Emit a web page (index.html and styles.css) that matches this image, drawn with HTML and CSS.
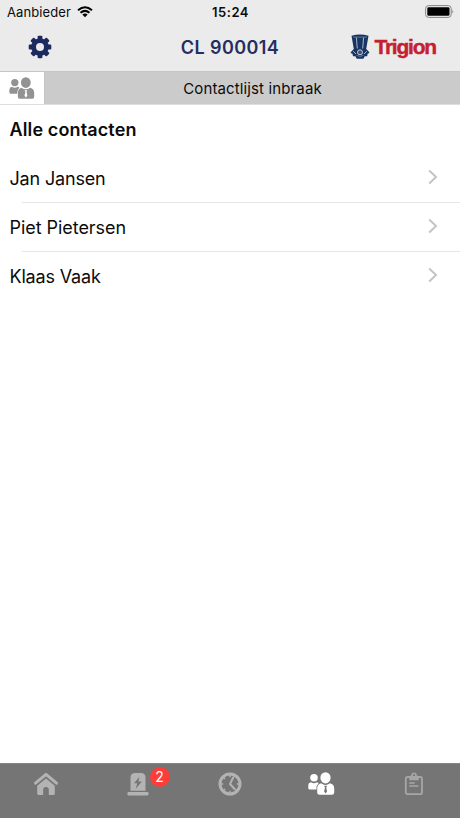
FILE: index.html
```html
<!DOCTYPE html>
<html lang="nl">
<head>
<meta charset="utf-8">
<title>Contactlijst inbraak</title>
<link rel="stylesheet" href="styles.css">
</head>
<body>
<svg class="defs" width="0" height="0">
  <symbol id="people" viewBox="0 0 27 24">
    <circle cx="6" cy="5.8" r="3.8"/>
    <path d="M3 10.2Q6 12.3 9 10.2Q10.2 10.5 10.7 11.1Q8.4 13 8.4 17.4H1.4Q.3 17.4.3 16V13.5Q.3 10.8 3 10.2Z"/>
    <ellipse cx="17.5" cy="5.8" rx="5.1" ry="5.6"/>
    <path fill-rule="evenodd" d="M13 11.3Q17.5 14.5 22 11.3Q26.2 12.3 26.2 16.5V20.5Q26.2 22.8 23.8 22.8H11.5Q9.2 22.8 9.2 20.5V16.5Q9.2 12.3 13 11.3ZM16.1 13.7L17 15.4L16.1 19.5L17.6 21.5L19.1 19.5L18.2 15.4L19.1 13.7Z"/>
  </symbol>
</svg>
<div class="app">
  <header class="top">
    <div class="status">
      <div class="carrier"><span>Aanbieder</span>
        <svg width="16" height="12" viewBox="0 0 16 12" fill="none" stroke="#000" stroke-width="2"><path d="M1 4.2Q8-1.8 15 4.2M3.5 6.8Q8 3 12.5 6.8"/><path d="M5.3 8.6Q8 6.6 10.7 8.6L8 11.3Z" fill="#000" stroke="none"/></svg>
      </div>
      <time>15:24</time>
      <svg class="battery" width="29" height="13" viewBox="0 0 29 13"><rect x=".6" y=".6" width="25.6" height="11.8" rx="3" fill="none" stroke="#858585"/><rect x="2.3" y="2.2" width="22.2" height="8.6" rx="1.4"/><path d="M27.3 4.5Q29 6.5 27.3 8.5Z" fill="#858585"/></svg>
    </div>
    <div class="nav">
      <svg class="gear" width="24" height="24" viewBox="-12 -12 24 24" fill="#1c2a5d">
        <g id="teeth"><rect x="-2.4" y="-11.3" width="4.8" height="22.6" rx="1"/><rect x="-11.3" y="-2.4" width="22.6" height="4.8" rx="1"/></g>
        <use href="#teeth" transform="rotate(45)"/>
        <circle r="8.8"/><circle r="4" fill="#ebebeb"/>
      </svg>
      <h1>CL 900014</h1>
      <div class="brand">
        <svg width="20" height="26" viewBox="0 0 20 26">
          <path fill="#173463" d="M1.5 1.7Q10-.5 18.5 1.7L16.2 15L18.7 17.4L19.5 19L17.6 19.8L17.2 22.2L14.8 22.3L13.4 24.8H6.8L5.4 22.3L3 22.2L2.5 19.8L.5 19L1.4 17.4L3.8 15Z"/>
          <path fill="none" stroke="#a9b6c7" stroke-width="1" d="M6.4 3.4L7.3 14.5M13.6 3.4L12.7 14.5M3.2 17.2L6 20M16.8 17.2L14 20"/>
          <path fill="none" stroke="#8293ac" stroke-width=".7" d="M3 3.1H17"/>
          <circle cx="10" cy="18.3" r="2.5" fill="#385277" stroke="#c4ccd7"/>
          <path fill="none" stroke="#8293ac" stroke-width=".7" d="M6.5 21.3Q10 23.6 13.5 21.3"/>
        </svg>
        <span>Trigion</span>
      </div>
    </div>
  </header>
  <div class="segment">
    <div class="segment-icon"><svg width="26" height="23" fill="#929292"><use href="#people"/></svg></div>
    <div class="segment-title"><span>Contactlijst inbraak</span></div>
  </div>
  <main>
    <h2><span>Alle contacten</span></h2>
    <ul>
      <li><span class="jan">Jan Jansen</span><svg class="chevron" width="10" height="16" viewBox="0 0 10 16"><path d="M1.2 1.5L8 8L1.2 14.5"/></svg></li>
      <li><span class="piet">Piet Pietersen</span><svg class="chevron" width="10" height="16" viewBox="0 0 10 16"><path d="M1.2 1.5L8 8L1.2 14.5"/></svg></li>
      <li><span class="klaas">Klaas Vaak</span><svg class="chevron" width="10" height="16" viewBox="0 0 10 16"><path d="M1.2 1.5L8 8L1.2 14.5"/></svg></li>
    </ul>
  </main>
  <nav class="tabs">
    <div class="tab"><svg width="26" height="24" viewBox="0 0 26 24"><path d="M2.5 11.2L13 2.4L23.5 11.2" fill="none" stroke="#b3b3b3" stroke-width="3" stroke-linecap="round" stroke-linejoin="round"/><path fill="#b3b3b3" d="M13 6.5L21.8 13.8V21.5Q21.8 23 20.3 23H15.8V17.5Q15.8 15 13 15T10.2 17.5V23H5.7Q4.2 23 4.2 21.5V13.8Z"/></svg></div>
    <div class="tab">
      <div class="alarm"><svg width="22" height="24" viewBox="0 0 22 24"><path fill="#b3b3b3" d="M3.5 18.7V5.5Q3.5 1 8 1H14Q18.5 1 18.5 5.5V18.7ZM1.5 20H20.5Q21.7 20 21.7 21.5T20.5 23.4H1.5Q.3 23.4.3 21.7T1.5 20Z"/><path fill="#757575" d="M12.5 4.7L7 11.3H10.2L8.8 16.8L14.8 9.5H11.4Z"/></svg><span class="badge">2</span></div>
    </div>
    <div class="tab"><svg width="24" height="24" viewBox="0 0 24 24" fill="none" stroke="#b3b3b3"><circle cx="12" cy="12" r="10" stroke-width="3"/><path stroke-width="2" d="M15.2 5.5L12 12L16.3 16.7" stroke-linecap="round" stroke-linejoin="round"/><path stroke-width="1.5" d="M12 3V5.2M12 18.8V21M3 12H5.2M18.8 12H21M5.5 5.5L7 7M5.5 18.5L7 17M18.5 18.5L17 17"/></svg></div>
    <div class="tab"><svg width="27" height="24" fill="#fff"><use href="#people"/></svg></div>
    <div class="tab"><svg width="20" height="24" viewBox="0 0 20 24" fill="none" stroke="#a6a6a6"><rect x="1.8" y="5" width="16.2" height="17.2" rx="1.7" stroke-width="1.8"/><path fill="#a6a6a6" stroke="none" fill-rule="evenodd" d="M5.3 8.3V5.3Q5.3 3.8 7 3.6Q7.6.6 10 .6T13 3.6Q14.7 3.8 14.7 5.3V8.3ZM10 2.2A1.1 1.1 0 1 0 10 4.4A1.1 1.1 0 1 0 10 2.2Z"/><path stroke-width="1.4" d="M5.2 11H10.7M5.2 14H14.4"/></svg></div>
  </nav>
</div>
</body>
</html>
```
FILE: styles.css
```css
* { box-sizing: border-box; }
body { margin: 0; background: #fff; color: #0b0b0b; font-family: Inter, "Liberation Sans", sans-serif; }
.defs { display: block; height: 0; }
.app { height: 818px; display: flex; flex-direction: column; }
.top { height: 71px; background: #ebebeb; }
.status { height: 24px; display: grid; grid-template-columns: 1fr auto 1fr; align-items: center; padding: 0 6px 0 7px; }
.carrier { display: flex; align-items: center; gap: 6px; font-size: 13px; letter-spacing: .1px; }
.status time { font-size: 13px; font-weight: 600; letter-spacing: .5px; }
.battery { justify-self: end; margin-top: -1px; }
.nav { height: 45px; display: grid; grid-template-columns: 1fr auto 1fr; align-items: center; padding: 0 24px 0 28px; }
h1 { margin: 2px 4px 0 0; font-size: 18px; line-height: 24px; font-weight: 600; color: #262d61; letter-spacing: .4px; }
.brand { justify-self: end; display: flex; align-items: center; gap: 4px; color: #c4202f; font: bold 21px "Liberation Sans", sans-serif; letter-spacing: -1.2px; -webkit-text-stroke: .4px #c4202f; }
.segment { height: 34px; display: flex; border-top: 1px solid #c5c5c5; border-bottom: 1px solid #dedede; }
.segment-icon { width: 45px; display: flex; align-items: center; justify-content: center; border-right: 1px solid #c4c4c4; }
.segment-title { flex: 1; display: flex; align-items: center; justify-content: center; background: #cbcbcb; font-size: 15px; letter-spacing: .13px; }
main { flex: 1; }
h2 { height: 49px; margin: 0; padding-left: 9.5px; display: flex; align-items: center; font-size: 18px; font-weight: 600; letter-spacing: .13px; }
ul { list-style: none; margin: 0; padding: 0; }
li { height: 49px; display: flex; align-items: center; justify-content: space-between; padding: 0 22px 0 9.5px; font-size: 18px; background: linear-gradient(#e6e6e6, #e6e6e6) 22px 100% / 100% 1px no-repeat; }
li:last-child { background: none; }
.jan, .klaas { letter-spacing: -.17px; }
.piet { letter-spacing: -.05px; }
.chevron { margin-top: -3px; fill: none; stroke: #c4c4c6; stroke-width: 2; }
.tabs { height: 55px; display: grid; grid-template-columns: repeat(5, 1fr); background: #757575; border-top: 1px solid #858585; }
.tab { display: flex; justify-content: center; align-items: flex-start; padding: 8px 1px 0 0; }
.alarm { position: relative; height: 24px; }
.badge { position: absolute; left: 23px; top: -5px; width: 20px; height: 20px; border-radius: 50%; background: #fc3d39; color: #fff; font-size: 14px; line-height: 20px; text-align: center; }
```
